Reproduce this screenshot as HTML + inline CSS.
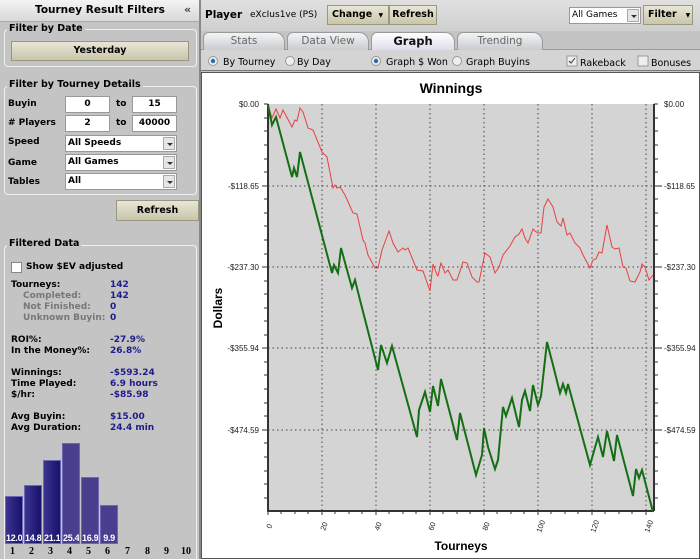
<!DOCTYPE html>
<html><head><style>
*{box-sizing:border-box;margin:0;padding:0}
html,body{width:700px;height:559px;overflow:hidden}
body{background:#c4c4c4;font-family:"DejaVu Sans",Verdana,sans-serif;font-size:9px;position:relative}
.a{position:absolute;white-space:nowrap}
.b{font-weight:bold}
.fs{position:absolute;border:1px solid #f0f0f0;border-radius:4px}
.lg{position:absolute;background:#c4c4c4;font-weight:bold;font-size:9.5px;padding:0 2px}
.btn{position:absolute;background:linear-gradient(#e8e6d6,#c9c6aa);border:1px solid #9a9780;font-weight:bold;text-align:center;font-size:9.5px;white-space:nowrap}
.in{position:absolute;background:#fff;border:1px solid #999;font-weight:bold;text-align:center;height:17px;line-height:15px}
.sel{position:absolute;background:#fff;border:1px solid #999;font-weight:bold;height:17px;line-height:15px;padding-left:2px;white-space:nowrap}
.sel i{position:absolute;right:1px;top:1px;width:12px;height:13px;background:#e6e6e6;border:1px solid #aaa}
.sel i:after{content:"";position:absolute;left:3px;top:5px;border:3px solid transparent;border-top:3px solid #333}
.v{color:#1c1c8c;font-weight:bold}
.g{color:#777;font-weight:bold}
.bar{position:absolute;background:linear-gradient(90deg,#3c3490,#16126c);border:1px solid #6e68b0;color:#fff;font-weight:bold;font-family:"Liberation Sans",sans-serif;font-size:9px;letter-spacing:-0.3px;text-align:center;overflow:hidden}
.tab{position:absolute;top:32px;height:18px;background:linear-gradient(#f4f4f4,#c8ccd0);border:1px solid #999;border-bottom:none;border-radius:6px 10px 0 0;text-align:center;color:#666;font-size:10.5px;line-height:17px}
.n{position:absolute;top:546px;font-weight:bold;font-family:'Liberation Serif',serif;font-size:10px}
</style></head><body>
<div class="a" style="left:0;top:0;width:199px;height:22px;background:linear-gradient(#f4f4f4,#d8d8d8);border-bottom:1px solid #aaa"></div>
<div class="a b" style="left:0;top:4px;width:200px;text-align:center;font-size:10.5px">Tourney Result Filters</div>
<div class="a b" style="left:184px;top:3px;font-size:11px;color:#444">«</div>
<div class="a" style="left:199px;top:0;width:2px;height:559px;background:#888"></div>

<div class="fs" style="left:4px;top:29px;width:193px;height:38px"></div>
<div class="lg" style="left:7px;top:23px">Filter by Date</div>
<div class="btn" style="left:11px;top:41px;width:178px;height:20px;line-height:18px">Yesterday</div>

<div class="fs" style="left:4px;top:86px;width:193px;height:109px"></div>
<div class="lg" style="left:7px;top:79px">Filter by Tourney Details</div>
<div class="a b" style="left:8px;top:99px">Buyin</div>
<div class="in" style="left:65px;top:96px;width:45px">0</div>
<div class="a b" style="left:116px;top:99px">to</div>
<div class="in" style="left:132px;top:96px;width:45px">15</div>
<div class="a b" style="left:8px;top:118px"># Players</div>
<div class="in" style="left:65px;top:115px;width:45px">2</div>
<div class="a b" style="left:116px;top:118px">to</div>
<div class="in" style="left:132px;top:115px;width:45px">40000</div>
<div class="a b" style="left:8px;top:137px">Speed</div>
<div class="sel" style="left:65px;top:135px;width:112px">All Speeds<i></i></div>
<div class="a b" style="left:8px;top:158px">Game</div>
<div class="sel" style="left:65px;top:154px;width:112px">All Games<i></i></div>
<div class="a b" style="left:8px;top:177px">Tables</div>
<div class="sel" style="left:65px;top:173px;width:112px">All<i></i></div>
<div class="btn" style="left:116px;top:200px;width:83px;height:21px;line-height:19px">Refresh</div>

<div class="fs" style="left:4px;top:245px;width:193px;height:320px"></div>
<div class="lg" style="left:7px;top:238px">Filtered Data</div>
<div class="a" style="left:11px;top:262px;width:11px;height:11px;background:#fff;border:1px solid #888"></div>
<div class="a b" style="left:26px;top:262px">Show $EV adjusted</div>
<div class="a b" style="left:11px;top:280px">Tourneys:</div><div class="a v" style="left:110px;top:280px">142</div>
<div class="a g" style="left:23px;top:291px">Completed:</div><div class="a v" style="left:110px;top:291px">142</div>
<div class="a g" style="left:23px;top:302px">Not Finished:</div><div class="a v" style="left:110px;top:302px">0</div>
<div class="a g" style="left:23px;top:313px">Unknown Buyin:</div><div class="a v" style="left:110px;top:313px">0</div>
<div class="a b" style="left:11px;top:335px">ROI%:</div><div class="a v" style="left:110px;top:335px">-27.9%</div>
<div class="a b" style="left:11px;top:346px">In the Money%:</div><div class="a v" style="left:110px;top:346px">26.8%</div>
<div class="a b" style="left:11px;top:368px">Winnings:</div><div class="a v" style="left:110px;top:368px">-$593.24</div>
<div class="a b" style="left:11px;top:379px">Time Played:</div><div class="a v" style="left:110px;top:379px">6.9 hours</div>
<div class="a b" style="left:11px;top:390px">$/hr:</div><div class="a v" style="left:110px;top:390px">-$85.98</div>
<div class="a b" style="left:11px;top:412px">Avg Buyin:</div><div class="a v" style="left:110px;top:412px">$15.00</div>
<div class="a b" style="left:11px;top:423px">Avg Duration:</div><div class="a v" style="left:110px;top:423px">24.4 min</div>

<div class="bar" style="left:5px;top:496px;width:18px;height:48px;padding-top:36px">12.0</div>
<div class="bar" style="left:24px;top:485px;width:18px;height:59px;padding-top:47px">14.8</div>
<div class="bar" style="left:43px;top:460px;width:18px;height:84px;padding-top:72px">21.1</div>
<div class="bar" style="left:62px;top:443px;width:18px;height:101px;padding-top:89px;background:#4a3f8e">25.4</div>
<div class="bar" style="left:81px;top:477px;width:18px;height:67px;padding-top:55px;background:#4a3f8e">16.9</div>
<div class="bar" style="left:100px;top:505px;width:18px;height:39px;padding-top:27px;background:#4a3f8e">9.9</div>
<div class="n" style="left:10px">1</div><div class="n" style="left:29px">2</div><div class="n" style="left:48px">3</div><div class="n" style="left:67px">4</div><div class="n" style="left:86px">5</div><div class="n" style="left:105px">6</div><div class="n" style="left:125px">7</div><div class="n" style="left:145px">8</div><div class="n" style="left:164px">9</div><div class="n" style="left:181px">10</div>

<div class="a" style="left:201px;top:0;width:499px;height:31px;background:linear-gradient(#e0e0e0,#cfcfcf)"></div>
<div class="a b" style="left:205px;top:9px;font-size:10.5px">Player</div>
<div class="a" style="left:250px;top:10px;font-size:9px">eXcIus1ve (PS)</div>
<div class="btn" style="left:327px;top:5px;width:62px;height:20px;line-height:18px;text-align:left;padding-left:4px">Change <span style="font-size:6px;margin-left:3px">▼</span></div>
<div class="btn" style="left:389px;top:5px;width:48px;height:20px;line-height:18px">Refresh</div>
<div class="sel" style="left:569px;top:7px;width:72px;font-weight:normal;height:17px">All Games<i></i></div>
<div class="btn" style="left:643px;top:5px;width:50px;height:20px;line-height:18px;text-align:left;padding-left:4px">Filter<span style="font-size:6px;margin-left:9px">▼</span></div>
<div class="a" style="left:201px;top:49px;width:499px;height:1px;background:#999"></div>
<div class="tab" style="left:203px;width:82px">Stats</div>
<div class="tab" style="left:287px;width:82px">Data View</div>
<div class="tab" style="left:371px;width:84px;color:#111;font-weight:bold;font-size:11.5px;background:linear-gradient(#fff,#dde)">Graph</div>
<div class="tab" style="left:457px;width:86px">Trending</div>
<div class="a" style="left:201px;top:50px;width:499px;height:21px;background:#d4d4d4;border-bottom:1px solid #777"></div>
<svg class="a" style="left:201px;top:50px" width="499" height="22" font-family="DejaVu Sans" font-size="9.5">
<circle cx="12" cy="11" r="4.5" fill="#eee" stroke="#999"/><circle cx="12" cy="11" r="2.2" fill="#2a6aa8"/>
<text x="22" y="15">By Tourney</text>
<circle cx="89" cy="11" r="4.5" fill="#eee" stroke="#999"/><text x="96" y="15">By Day</text>
<circle cx="175" cy="11" r="4.5" fill="#eee" stroke="#999"/><circle cx="175" cy="11" r="2.2" fill="#2a6aa8"/>
<text x="185" y="15">Graph $ Won</text>
<circle cx="256" cy="11" r="4.5" fill="#eee" stroke="#999"/><text x="265" y="15">Graph Buyins</text>
<rect x="366" y="6" width="10" height="10" fill="#eee" stroke="#999"/><path d="M368 11l2 2 4-5" stroke="#333" fill="none"/>
<text x="379" y="16">Rakeback</text>
<rect x="437" y="6" width="10" height="10" fill="#eee" stroke="#999"/><text x="450" y="16">Bonuses</text>
</svg>
<svg class="a" style="left:201px;top:72px" width="499" height="487" font-family="Liberation Sans">
<rect x="0.5" y="0.5" width="498" height="486" fill="#fff" stroke="#555"/>
<g transform="translate(-201,-72)">
<text x="451" y="93" font-weight="bold" font-size="14" text-anchor="middle">Winnings</text>
<rect x="268" y="104" width="386" height="407" fill="#d4d4d4"/>
<g stroke="#444" stroke-dasharray="1.5,3" stroke-width="1">
<path d="M322 104V511M376 104V511M430 104V511M484 104V511M538 104V511M592 104V511M646 104V511M268 186H654M268 267H654M268 348H654M268 430H654"/>
</g>
<path d="M268 104V511H654M654 104V511" stroke="#333" stroke-width="2" fill="none"/>
<g stroke="#333">
<path d="M264 104h4M264 118h4M264 131h4M264 145h4M264 159h4M264 172h4M262 186h6M264 199h4M264 213h4M264 226h4M264 240h4M264 254h4M262 267h6M264 281h4M264 294h4M264 308h4M264 321h4M264 335h4M262 348h6M264 362h4M264 375h4M264 389h4M264 403h4M264 416h4M262 430h6M264 443h4M264 457h4M264 471h4M264 484h4M264 498h4"/>
<path d="M654 104h4M654 118h4M654 131h4M654 145h4M654 159h4M654 172h4M654 186h8M654 199h4M654 213h4M654 226h4M654 240h4M654 254h4M654 267h8M654 281h4M654 294h4M654 308h4M654 321h4M654 335h4M654 348h8M654 362h4M654 375h4M654 389h4M654 403h4M654 416h4M654 430h8M654 443h4M654 457h4M654 471h4M654 484h4M654 498h4"/>
<path d="M268 511v4M281 511v3M295 511v3M308 511v3M322 511v4M335 511v3M349 511v3M362 511v3M376 511v4M389 511v3M403 511v3M416 511v3M430 511v4M443 511v3M457 511v3M470 511v3M484 511v4M497 511v3M511 511v3M524 511v3M538 511v4M551 511v3M565 511v3M578 511v3M592 511v4M605 511v3M619 511v3M632 511v3M646 511v4"/>
</g>
<g font-size="8" fill="#222" text-anchor="end">
<text x="259" y="107">$0.00</text><text x="259" y="189">-$118.65</text><text x="259" y="270">-$237.30</text><text x="259" y="351">-$355.94</text><text x="259" y="433">-$474.59</text>
</g>
<g font-size="8" fill="#222">
<text x="664" y="107">$0.00</text><text x="664" y="189">-$118.65</text><text x="664" y="270">-$237.30</text><text x="664" y="351">-$355.94</text><text x="664" y="433">-$474.59</text>
</g>
<g font-size="7.5" fill="#222">
<text transform="translate(271,529) rotate(-70)">0</text>
<text transform="translate(325,531) rotate(-70)">20</text>
<text transform="translate(379,531) rotate(-70)">40</text>
<text transform="translate(433,531) rotate(-70)">60</text>
<text transform="translate(487,531) rotate(-70)">80</text>
<text transform="translate(541,533) rotate(-70)">100</text>
<text transform="translate(595,533) rotate(-70)">120</text>
<text transform="translate(649,533) rotate(-70)">140</text>
</g>
<text x="461" y="550" font-weight="bold" font-size="12" text-anchor="middle">Tourneys</text>
<text transform="translate(222,308) rotate(-90)" font-weight="bold" font-size="12" text-anchor="middle">Dollars</text>
<polyline fill="none" stroke="#e84040" stroke-width="1" points="268,105 272,118 276,109 280,118 283,110 292,127 295,120 297,121 300,108 303,112 308,128 313,130 322,152 327,157 333,188 335,185 337,188 340,187 345,195 353,213 357,214 363,240 365,243 368,255 375,268 378,268 382,250 389,231 393,243 398,252 403,248 405,250 408,248 417,270 423,271 430,291 433,264 437,275 438,276 441,263 445,273 448,270 453,280 457,280 463,262 467,263 472,277 477,282 479,282 485,253 490,257 495,273 499,267 503,255 510,246 515,237 519,234 522,229 525,238 528,243 533,229 535,231 538,233 541,233 544,207 548,199 553,207 557,222 561,226 563,218 567,235 570,233 575,243 580,248 583,255 590,268 593,260 596,259 599,252 602,253 607,225 612,247 615,249 619,248 623,267 626,268 630,281 635,282 640,272 642,264 645,267 649,280 653,275"/>
<polyline fill="none" stroke="#146e14" stroke-width="2" points="268,105 272,125 276,117 292,177 294,168 297,177 300,152 332,273 334,265 338,273 341,248 352,288 355,280 360,300 378,370 381,345 387,363 392,346 417,437 419,410 425,392 430,412 433,386 438,406 441,379 457,440 460,413 476,475 482,455 484,428 488,447 495,469 498,460 503,407 506,416 512,398 519,427 522,400 525,391 530,411 533,385 538,405 541,396 547,342 553,365 560,393 563,384 566,393 568,384 590,465 598,437 603,457 607,431 614,461 617,435 633,496 636,469 639,478 642,470 653,512"/>
</g>
</svg>
</body></html>
